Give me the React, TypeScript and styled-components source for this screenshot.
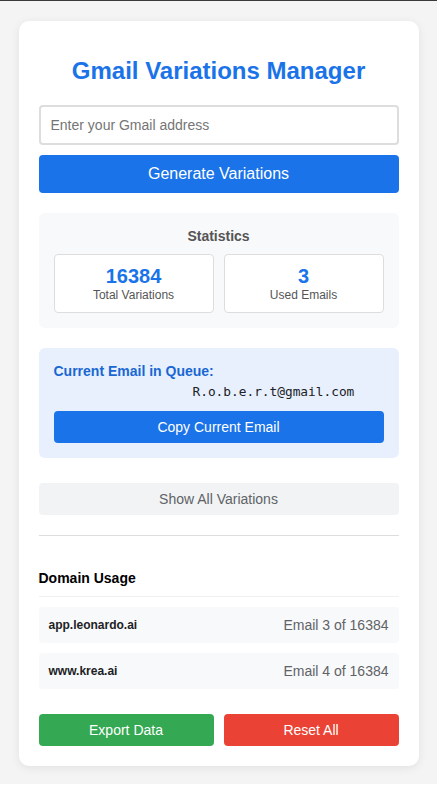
import React from "react";
import styled, { createGlobalStyle } from "styled-components";

const Global = createGlobalStyle`
  html { background: #ffffff; }
  body {
    margin: 0;
    font-family: "Liberation Sans", Arial, sans-serif;
  }
  * { box-sizing: border-box; }
`;

const Page = styled.div`
  background: #f4f4f4;
  border-top: 1px solid #3a3a3a;
  padding: 20px 18px 18px;
`;

const Card = styled.div`
  max-width: 400px;
  margin: 0 auto;
  background: #fff;
  border-radius: 10px;
  padding: 20px;
  box-shadow: 0 2px 10px rgba(0, 0, 0, 0.08);
`;

const Title = styled.h1`
  margin: 16px 0 20px;
  text-align: center;
  color: #1a73e8;
  font-size: 24px;
  line-height: 28px;
  font-weight: bold;
`;

const Input = styled.input`
  display: block;
  width: 100%;
  height: 40px;
  padding: 10px;
  border: 2px solid #ddd;
  border-radius: 4px;
  font-family: "Liberation Sans", Arial, sans-serif;
  font-size: 14px;
  color: #333;
  outline: none;
  &::placeholder { color: #757575; }
`;

const Button = styled.button<{ $bg: string; $color?: string; $h?: number; $size?: number; $mt?: number }>`
  display: block;
  width: 100%;
  height: ${(p) => p.$h ?? 32}px;
  margin-top: ${(p) => p.$mt ?? 0}px;
  border: none;
  border-radius: 4px;
  background: ${(p) => p.$bg};
  color: ${(p) => p.$color ?? "#fff"};
  font-family: "Liberation Sans", Arial, sans-serif;
  font-size: ${(p) => p.$size ?? 14}px;
  cursor: pointer;
  padding: 0;
`;

const StatsBox = styled.div`
  margin-top: 20px;
  background: #f8f9fa;
  border-radius: 6px;
  padding: 15px;
`;

const StatsTitle = styled.div`
  text-align: center;
  font-size: 14px;
  line-height: 16px;
  font-weight: bold;
  color: #555;
  margin-bottom: 10px;
`;

const StatsGrid = styled.div`
  display: grid;
  grid-template-columns: 1fr 1fr;
  gap: 10px;
`;

const StatCard = styled.div`
  background: #fff;
  border: 1px solid #ddd;
  border-radius: 4px;
  padding: 10px;
  text-align: center;
`;

const StatNumber = styled.div`
  font-size: 20px;
  line-height: 23px;
  font-weight: bold;
  color: #1a73e8;
`;

const StatLabel = styled.div`
  font-size: 12px;
  line-height: 14px;
  color: #555;
`;

const QueueBox = styled.div`
  margin-top: 20px;
  background: #e8f0fe;
  border-radius: 6px;
  padding: 15px;
`;

const QueueLabel = styled.div`
  font-size: 14px;
  line-height: 16px;
  font-weight: bold;
  color: #1967d2;
`;

const QueueEmail = styled.div`
  margin: 5px 0 11px;
  padding-left: 139px;
  font-family: "DejaVu Sans Mono", "Liberation Mono", monospace;
  font-size: 12.8px;
  line-height: 16px;
  color: #202124;
`;

const Divider = styled.hr`
  margin: 20px 0 0;
  border: none;
  border-top: 1px solid #ddd;
`;

const SectionTitle = styled.div`
  margin-top: 34px;
  font-size: 14px;
  line-height: 16px;
  font-weight: bold;
  color: #000;
  padding-bottom: 10px;
  border-bottom: 1px solid #f0f0f0;
`;

const DomainList = styled.div`
  margin-top: 10px;
  display: flex;
  flex-direction: column;
  gap: 10px;
`;

const DomainRow = styled.div`
  display: flex;
  justify-content: space-between;
  align-items: center;
  height: 36px;
  padding: 0 10px;
  background: #f8f9fa;
  border-radius: 4px;
`;

const DomainName = styled.span`
  font-size: 12px;
  font-weight: bold;
  color: #202124;
`;

const DomainCount = styled.span`
  font-size: 14px;
  color: #5f6368;
`;

const ActionRow = styled.div`
  margin-top: 25px;
  display: grid;
  grid-template-columns: 1fr 1fr;
  gap: 10px;
`;

const domains = [
  { name: "app.leonardo.ai", count: "Email 3 of 16384" },
  { name: "www.krea.ai", count: "Email 4 of 16384" },
];

export default function App() {
  return (
    <>
      <Global />
      <Page>
        <Card>
          <Title>Gmail Variations Manager</Title>
          <Input placeholder="Enter your Gmail address" />
          <Button $bg="#1a73e8" $h={38} $size={16} $mt={10}>
            Generate Variations
          </Button>

          <StatsBox>
            <StatsTitle>Statistics</StatsTitle>
            <StatsGrid>
              <StatCard>
                <StatNumber>16384</StatNumber>
                <StatLabel>Total Variations</StatLabel>
              </StatCard>
              <StatCard>
                <StatNumber>3</StatNumber>
                <StatLabel>Used Emails</StatLabel>
              </StatCard>
            </StatsGrid>
          </StatsBox>

          <QueueBox>
            <QueueLabel>Current Email in Queue:</QueueLabel>
            <QueueEmail>R.o.b.e.r.t@gmail.com</QueueEmail>
            <Button $bg="#1a73e8">Copy Current Email</Button>
          </QueueBox>

          <Button $bg="#f1f3f4" $color="#5f6368" $mt={25}>
            Show All Variations
          </Button>

          <Divider />

          <SectionTitle>Domain Usage</SectionTitle>
          <DomainList>
            {domains.map((d) => (
              <DomainRow key={d.name}>
                <DomainName>{d.name}</DomainName>
                <DomainCount>{d.count}</DomainCount>
              </DomainRow>
            ))}
          </DomainList>

          <ActionRow>
            <Button $bg="#34a853">Export Data</Button>
            <Button $bg="#ea4335">Reset All</Button>
          </ActionRow>
        </Card>
      </Page>
    </>
  );
}
